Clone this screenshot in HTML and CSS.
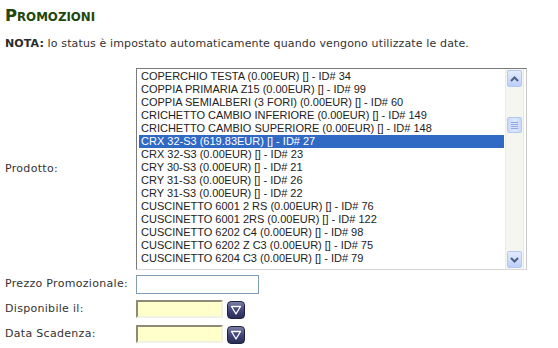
FILE: index.html
```html
<!DOCTYPE html>
<html lang="it">
<head>
<meta charset="utf-8">
<title>Promozioni</title>
<link rel="stylesheet" href="styles.css">
</head>
<body>
<h1 class="title">Promozioni</h1>
<p class="note"><b>NOTA:</b> lo status è impostato automaticamente quando vengono utilizzate le date.</p>
<div class="form">
  <label class="lbl lbl-center">Prodotto:</label>
  <div class="listbox">
    <ul class="options">
      <li>COPERCHIO TESTA (0.00EUR) [] - ID# 34</li>
      <li>COPPIA PRIMARIA Z15 (0.00EUR) [] - ID# 99</li>
      <li>COPPIA SEMIALBERI (3 FORI) (0.00EUR) [] - ID# 60</li>
      <li>CRICHETTO CAMBIO INFERIORE (0.00EUR) [] - ID# 149</li>
      <li>CRICHETTO CAMBIO SUPERIORE (0.00EUR) [] - ID# 148</li>
      <li class="sel">CRX 32-S3 (619.83EUR) [] - ID# 27</li>
      <li>CRX 32-S3 (0.00EUR) [] - ID# 23</li>
      <li>CRY 30-S3 (0.00EUR) [] - ID# 21</li>
      <li>CRY 31-S3 (0.00EUR) [] - ID# 26</li>
      <li>CRY 31-S3 (0.00EUR) [] - ID# 22</li>
      <li>CUSCINETTO 6001 2 RS (0.00EUR) [] - ID# 76</li>
      <li>CUSCINETTO 6001 2RS (0.00EUR) [] - ID# 122</li>
      <li>CUSCINETTO 6202 C4 (0.00EUR) [] - ID# 98</li>
      <li>CUSCINETTO 6202 Z C3 (0.00EUR) [] - ID# 75</li>
      <li>CUSCINETTO 6204 C3 (0.00EUR) [] - ID# 79</li>
    </ul>
    <div class="scrollbar">
      <div class="sb-btn">
        <svg width="9" height="6" viewBox="0 0 9 6"><path d="M1 5 L4.5 1.5 L8 5" fill="none" stroke="#4d6185" stroke-width="2"/></svg>
      </div>
      <div class="sb-track">
        <div class="sb-thumb"><span></span><span></span><span></span><span></span></div>
      </div>
      <div class="sb-btn">
        <svg width="9" height="6" viewBox="0 0 9 6"><path d="M1 1 L4.5 4.5 L8 1" fill="none" stroke="#4d6185" stroke-width="2"/></svg>
      </div>
    </div>
  </div>

  <label class="lbl">Prezzo Promozionale:</label>
  <div class="field"><input class="txt" type="text"></div>

  <label class="lbl">Disponibile il:</label>
  <div class="field">
    <input class="date" type="text">
    <span class="cal">
      <svg width="12" height="10" viewBox="0 0 12 10"><polygon points="1.5,1.5 10.5,1.5 6,9" fill="#45497a" stroke="#ffffff" stroke-width="1.3" stroke-linejoin="round"/></svg>
    </span>
  </div>

  <label class="lbl">Data Scadenza:</label>
  <div class="field">
    <input class="date" type="text">
    <span class="cal">
      <svg width="12" height="10" viewBox="0 0 12 10"><polygon points="1.5,1.5 10.5,1.5 6,9" fill="#45497a" stroke="#ffffff" stroke-width="1.3" stroke-linejoin="round"/></svg>
    </span>
  </div>
</div>
</body>
</html>
```
FILE: styles.css
```css
html, body {
  margin: 0;
  background: #ffffff;
}
body {
  padding: 0 5px;
  font-family: "DejaVu Sans", Verdana, sans-serif;
  color: #333333;
}
.title {
  margin: 0;
  padding-top: 6px;
  height: 20px;
  font-family: "DejaVu Sans", Verdana, sans-serif;
  font-size: 11.8px;
  line-height: 20px;
  text-transform: uppercase;
  font-weight: bold;
  color: #21470b;
}
.title::first-letter {
  font-size: 16.4px;
}
.note {
  margin: 11px 0 0;
  font-size: 11px;
  line-height: 13px;
  letter-spacing: 0.13px;
}
.note b {
  color: #2b2b2b;
}
.form {
  margin-top: 18px;
  display: grid;
  grid-template-columns: 131px auto;
  row-gap: 5px;
  align-items: start;
  justify-content: start;
}
.lbl {
  font-size: 11px;
  line-height: 18px;
  height: 20px;
  letter-spacing: 0.3px;
}
.lbl-center {
  align-self: center;
  height: auto;
}
.listbox {
  width: 389px;
  height: 200px;
  border: 1px solid;
  border-color: #7a7a7a #c8c8c8 #d8d8d8 #7a7a7a;
  display: flex;
  background: #fff;
}
.options {
  list-style: none;
  margin: 0;
  padding: 1px 1px 0 2px;
  flex: 1;
  font-family: "Liberation Sans", Arial, sans-serif;
  font-size: 11px;
  color: #222;
}
.options li {
  height: 13px;
  line-height: 13px;
  padding-left: 2px;
  white-space: nowrap;
}
.options li.sel {
  background: #316ac5;
  color: #ffffff;
}
.scrollbar {
  width: 17px;
  margin-right: 2px;
  display: flex;
  flex-direction: column;
  background: #f6f6f0;
  border-left: 1px solid #eeede5;
  border-right: 1px solid #e8e8e0;
  padding: 1px 0;
}
.sb-btn {
  height: 15px;
  margin: 0 1px;
  border: 1px solid #b5c8f2;
  border-radius: 2px;
  background: linear-gradient(#e3ebfe, #bccffb);
  display: flex;
  align-items: center;
  justify-content: center;
}
.sb-track {
  flex: 1;
  padding-top: 30px;
}
.sb-thumb {
  height: 14px;
  margin: 0 1px;
  border: 1px solid #b5c8f2;
  border-radius: 2px;
  background: linear-gradient(90deg, #c9d8fc, #dfe8fe 50%, #c9d8fc);
  display: flex;
  flex-direction: column;
  align-items: center;
  justify-content: center;
  gap: 1px;
}
.sb-thumb span {
  display: block;
  width: 7px;
  height: 1px;
  background: #8fa9e0;
}
.field {
  height: 20px;
  display: flex;
  align-items: flex-start;
  gap: 4px;
}
input {
  margin: 0;
  padding: 0 2px;
  font-family: "Liberation Sans", Arial, sans-serif;
  font-size: 11px;
  box-sizing: border-box;
  outline: none;
}
.txt {
  width: 123px;
  height: 19px;
  border: 1px solid #7f9db9;
  background: #fff;
}
.date {
  width: 87px;
  height: 18px;
  border: 2px solid;
  border-color: #8d8a76 #f2f1e6 #f2f1e6 #8d8a76;
  background: #ffffcc;
}
.cal {
  width: 18px;
  height: 18px;
  margin-top: 1px;
  box-sizing: border-box;
  border: 1px solid #1e2140;
  border-radius: 4px;
  background: linear-gradient(#7a7fa6, #43477a 50%, #2a2d55);
  display: flex;
  align-items: center;
  justify-content: center;
}
```
